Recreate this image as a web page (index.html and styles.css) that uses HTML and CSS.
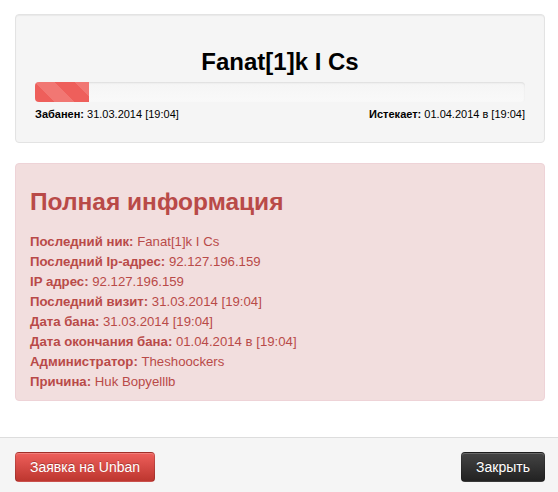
FILE: index.html
```html
<!DOCTYPE html>
<html lang="ru">
<head>
  <meta charset="UTF-8" />
  <title>Информация о бане</title>
  <link rel="stylesheet" href="styles.css">
</head>
<body>
  <div class="modal-body">
    <div class="well">
      <h2>Fanat[1]k I Cs</h2>
      <div class="progress"><div class="bar" style="width: 11%;"></div></div>
      <div class="dates">
        <span><b>Забанен:</b> 31.03.2014 [19:04]</span>
        <span><b>Истекает:</b> 01.04.2014 в [19:04]</span>
      </div>
    </div>

    <div class="alert">
      <h4>Полная информация</h4>
      <div><b>Последний ник:</b> Fanat[1]k I Cs</div>
      <div><b>Последний Ip-адрес:</b> 92.127.196.159</div>
      <div><b>IP адрес:</b> 92.127.196.159</div>
      <div><b>Последний визит:</b> 31.03.2014 [19:04]</div>
      <div><b>Дата бана:</b> 31.03.2014 [19:04]</div>
      <div><b>Дата окончания бана:</b> 01.04.2014 в [19:04]</div>
      <div><b>Администратор:</b> Theshoockers</div>
      <div><b>Причина:</b> Huk Bopyelllb</div>
    </div>
  </div>

  <div class="modal-footer">
    <button class="btn btn-danger">Заявка на Unban</button>
    <button class="btn btn-inverse">Закрыть</button>
  </div>
</body>
</html>
```

FILE: styles.css
```css
body { margin: 0; font-family: "Liberation Sans", Arial, sans-serif; font-size: 14px; line-height: 20px; color: #333; background: #fff; }
.modal-body { padding: 14px 13px 16px 15px; }
.well { background: #f5f5f5; border: 1px solid #e3e3e3; border-radius: 4px; padding: 19px 19px 18px; margin-bottom: 20px; box-shadow: inset 0 1px 1px rgba(0,0,0,0.05); }
.well h2 { margin: 8px 0 0; font-size: 24px; line-height: 40px; text-align: center; color: #000; }
.progress { height: 20px; background: linear-gradient(#f5f5f5, #f9f9f9); border-radius: 4px; box-shadow: inset 0 1px 2px rgba(0,0,0,0.1); overflow: hidden; }
.bar { height: 100%; background-color: #ee5f5b; background-image: linear-gradient(45deg, rgba(255,255,255,0.15) 25%, transparent 25%, transparent 50%, rgba(255,255,255,0.15) 50%, rgba(255,255,255,0.15) 75%, transparent 75%, transparent); background-size: 40px 40px; }
.dates { display: flex; justify-content: space-between; padding-top: 2px; font-size: 11px; line-height: 20px; color: #000; }
.alert { background: #f2dede; border: 1px solid #eed3d7; border-radius: 4px; color: #b94a48; padding: 14px 14px 8px; margin-bottom: 20px; font-size: 13.2px; }
.alert h4 { margin: 4px 0 10px; font-size: 24.5px; line-height: 40px; color: #b94a48; }
.modal-footer { display: flex; justify-content: space-between; padding: 14px 13px 15px 15px; background: #f5f5f5; border-top: 1px solid #ddd; }
.btn { font-family: inherit; font-size: 14px; line-height: 20px; padding: 4px 14px; border-radius: 4px; color: #fff; border: 1px solid rgba(0,0,0,0.15); text-shadow: 0 -1px 0 rgba(0,0,0,0.25); box-shadow: inset 0 1px 0 rgba(255,255,255,0.2); cursor: pointer; }
.btn-danger { background: linear-gradient(#ee5f5b, #bd362f); }
.btn-inverse { background: linear-gradient(#444, #222); }
```
